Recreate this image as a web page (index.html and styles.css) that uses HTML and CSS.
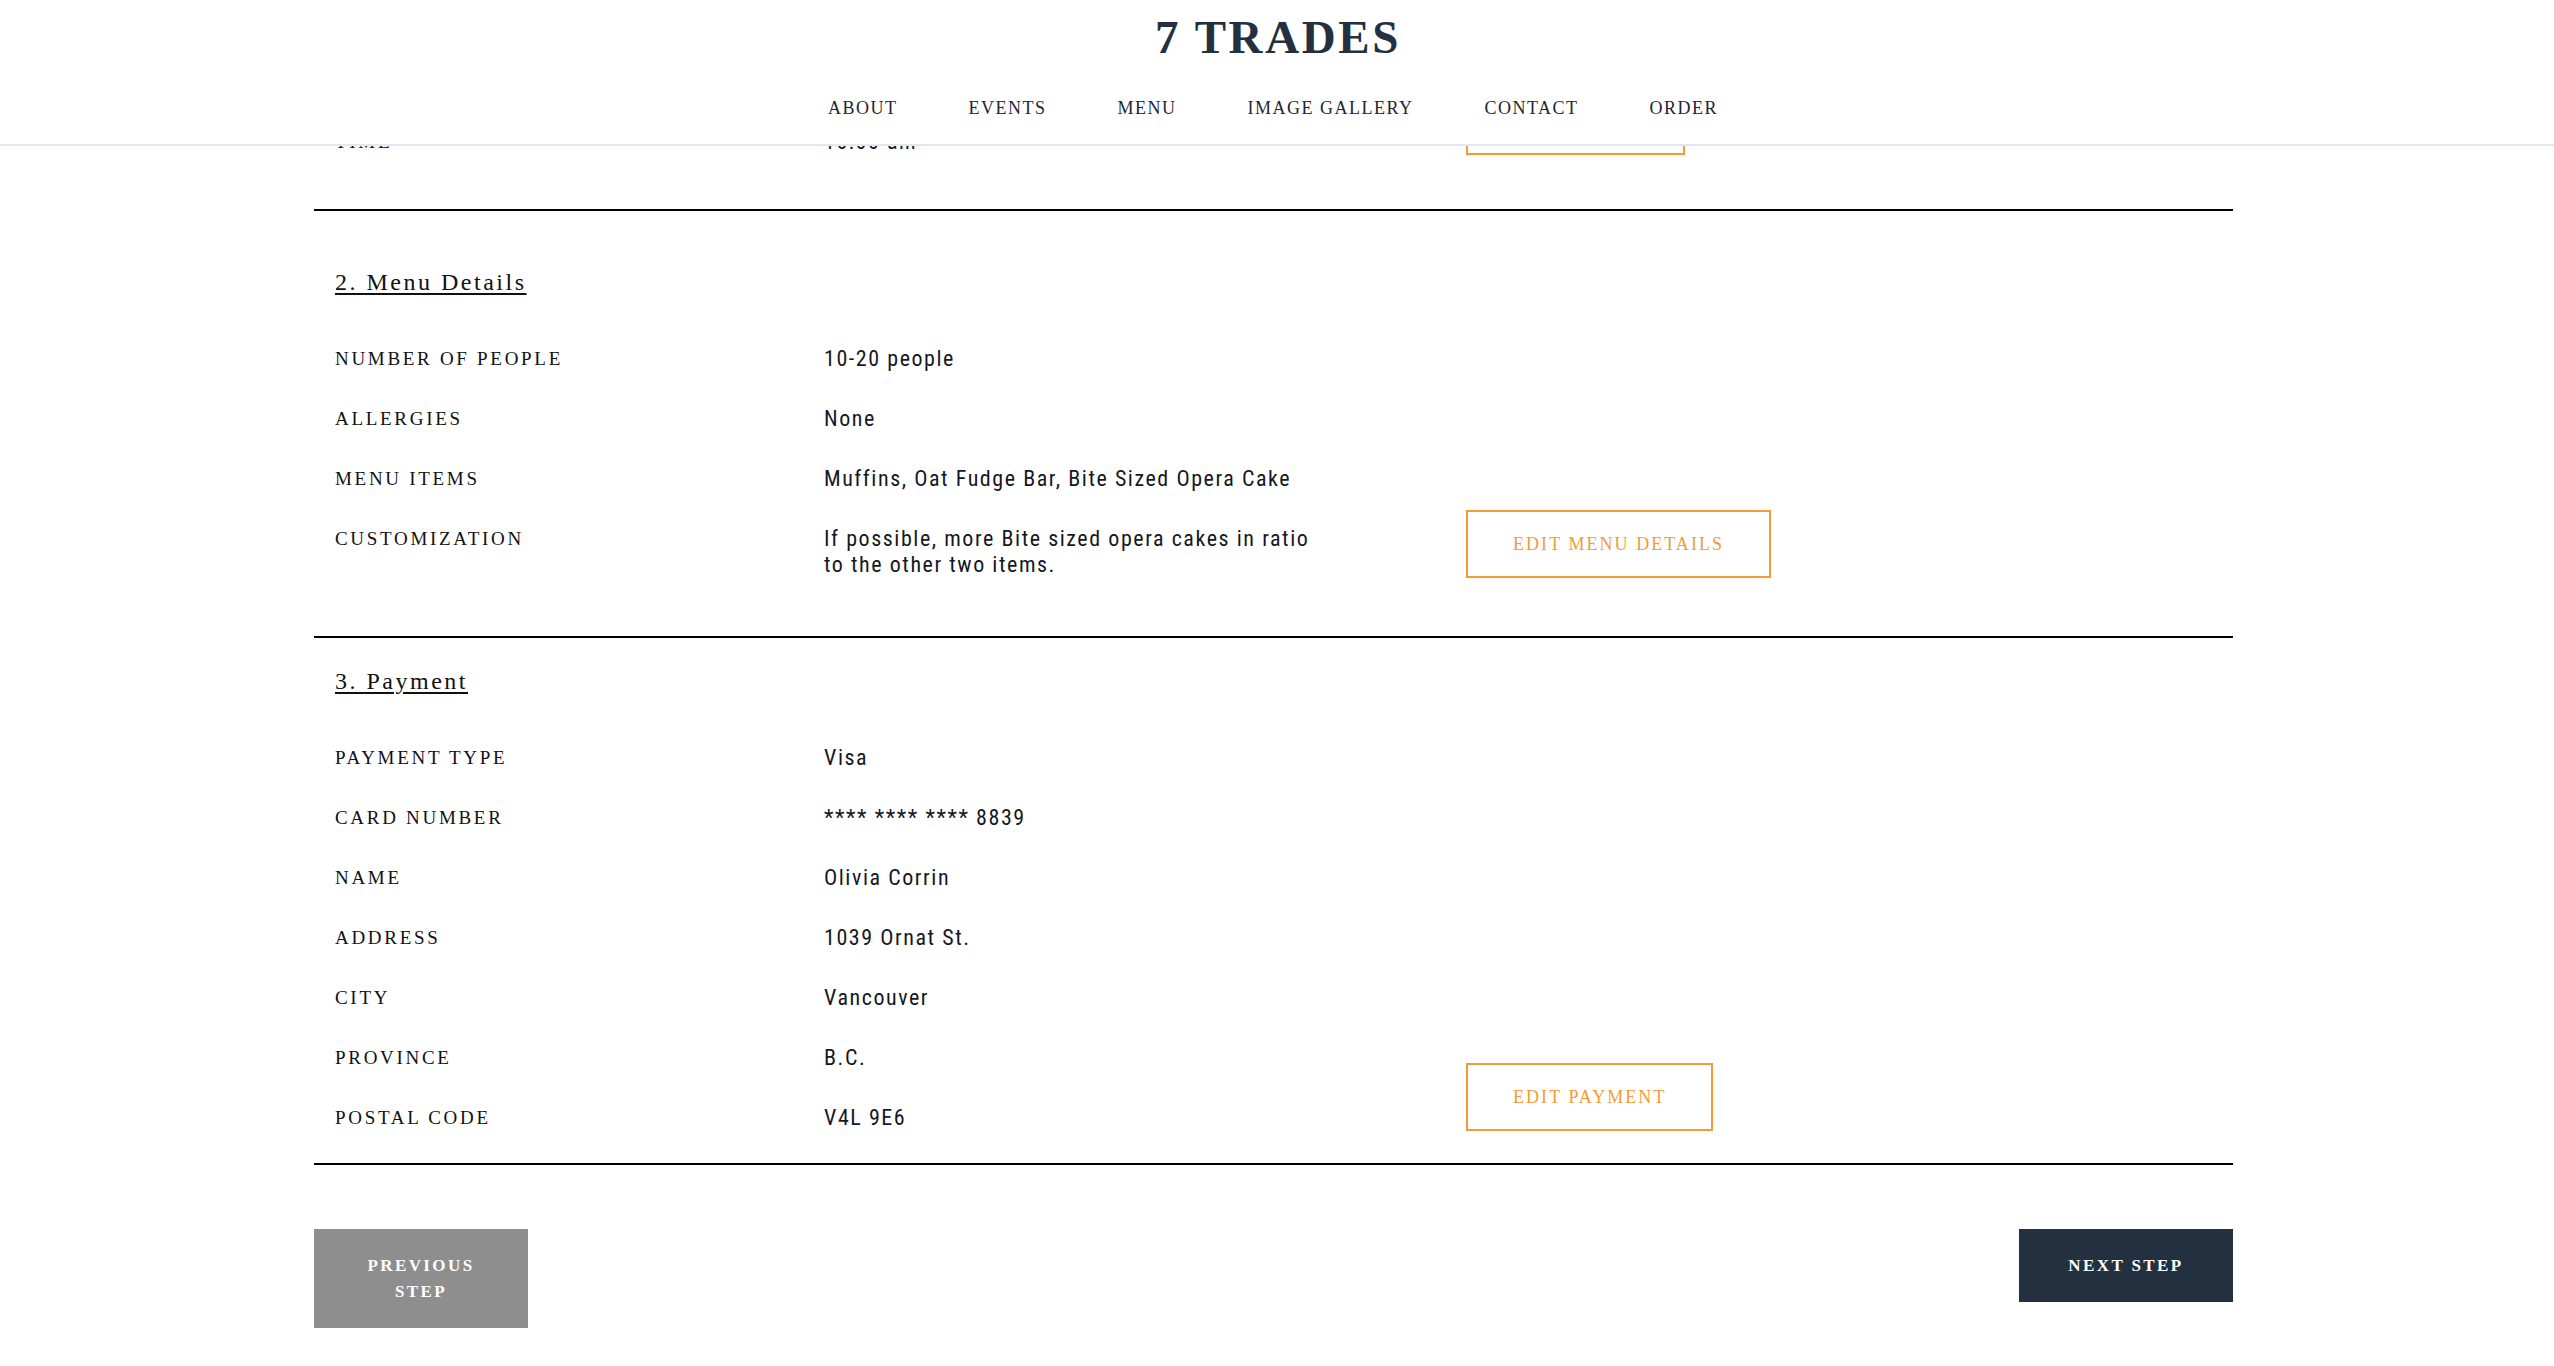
FILE: index.html
```html
<!DOCTYPE html>
<html lang="en">
<head>
<meta charset="utf-8">
<title>7 Trades — Order Review</title>
<link rel="stylesheet" href="styles.css">
</head>
<body>
<header class="site-header">
  <div class="logo">7 TRADES</div>
  <nav class="main-nav">
    <a href="#">About</a>
    <a href="#">Events</a>
    <a href="#">Menu</a>
    <a href="#">Image Gallery</a>
    <a href="#">Contact</a>
    <a href="#">Order</a>
  </nav>
</header>

<main class="order">
  <section class="review review--event">
    <div class="review__body">
      <h2 class="review__title">1. Event Details</h2>
      <dl class="review__rows">
        <dt>Event type</dt><dd>Corporate Meeting</dd>
        <dt>Date</dt><dd>June 21, 2018</dd>
        <dt>Time</dt><dd>10:00 am</dd>
      </dl>
    </div>
    <a href="#" class="edit-btn">Edit event</a>
  </section>

  <section class="review review--menu" id="menu-details">
    <div class="review__body">
      <h2 class="review__title">2. Menu Details</h2>
      <dl class="review__rows">
        <dt>Number of people</dt><dd>10-20 people</dd>
        <dt>Allergies</dt><dd>None</dd>
        <dt>Menu items</dt><dd>Muffins, Oat Fudge Bar, Bite Sized Opera Cake</dd>
        <dt>Customization</dt><dd class="wrap">If possible, more Bite sized opera cakes in ratio to the other two items.</dd>
      </dl>
    </div>
    <a href="#" class="edit-btn">Edit menu details</a>
  </section>

  <section class="review review--payment">
    <div class="review__body">
      <h2 class="review__title">3. Payment</h2>
      <dl class="review__rows">
        <dt>Payment type</dt><dd>Visa</dd>
        <dt>Card number</dt><dd>**** **** **** 8839</dd>
        <dt>Name</dt><dd>Olivia Corrin</dd>
        <dt>Address</dt><dd>1039 Ornat St.</dd>
        <dt>City</dt><dd>Vancouver</dd>
        <dt>Province</dt><dd>B.C.</dd>
        <dt>Postal code</dt><dd>V4L 9E6</dd>
      </dl>
    </div>
    <a href="#" class="edit-btn">Edit payment</a>
  </section>

  <div class="step-nav">
    <a href="#" class="step-btn step-btn--prev">Previous step</a>
    <a href="#" class="step-btn step-btn--next">Next step</a>
  </div>
</main>
<script src="script.js"></script>
</body>
</html>
```

FILE: styles.css
```css
html, body {
  margin: 0;
  padding: 0;
  background: #ffffff;
}

body {
  font-family: "Liberation Serif", "Times New Roman", serif;
  color: #111111;
}

a {
  text-decoration: none;
  color: inherit;
}

/* ---------- header ---------- */
.site-header {
  position: fixed;
  top: 0;
  left: 0;
  right: 0;
  z-index: 10;
  background: #ffffff;
  border-bottom: 2px solid #e3e7f0;
  padding: 11px 0 26px;
  display: flex;
  flex-direction: column;
  align-items: center;
}

.logo {
  font-family: "Liberation Serif", serif;
  font-weight: 700;
  font-size: 47px;
  line-height: 52px;
  letter-spacing: 2.6px;
  color: #233040;
  padding-left: 2px;
}

.main-nav {
  margin-top: 35px;
  padding-right: 8px;
  display: flex;
  gap: 71px;
}

.main-nav a {
  font-size: 18px;
  line-height: 20px;
  letter-spacing: 1.5px;
  text-transform: uppercase;
  color: #1e2632;
}

/* ---------- order review ---------- */
.order {
  width: 1919px;
  margin-left: 314px;
  padding-top: 146px;
  padding-bottom: 140px;
}

.review {
  display: flex;
  border-bottom: 2px solid #000000;
  padding-left: 21px;
}

.review--event {
  padding-top: 56px;
  padding-bottom: 54px;
}

.review--menu {
  padding-top: 56px;
  padding-bottom: 58px;
}

.review--payment {
  padding-top: 28px;
  padding-bottom: 32px;
}

.review__body {
  flex: 0 0 1131px;
}

.review__title {
  margin: 0 0 49px;
  font-size: 24px;
  line-height: 30px;
  font-weight: 400;
  letter-spacing: 2.5px;
  color: #111111;
  text-decoration: underline;
  text-decoration-thickness: 2px;
  text-underline-offset: 3px;
  display: inline-block;
}

.review__rows {
  margin: 0;
  display: grid;
  grid-template-columns: 489px 1fr;
  row-gap: 34px;
}

.review__rows dt {
  font-size: 19px;
  line-height: 26px;
  letter-spacing: 2.7px;
  text-transform: uppercase;
  color: #111111;
}

.review__rows dd {
  margin: 0;
  font-family: "Liberation Sans Narrow", "Roboto Condensed", "DejaVu Sans Condensed", "Liberation Sans", sans-serif;
  font-stretch: condensed;
  font-size: 22px;
  line-height: 26px;
  letter-spacing: 1.55px;
  color: #151823;
}

.review__rows dd.wrap {
  max-width: 505px;
}

.edit-btn {
  align-self: flex-end;
  border: 2px solid #f49b33;
  padding: 22px 45px;
  font-size: 18px;
  line-height: 20px;
  letter-spacing: 2.05px;
  text-transform: uppercase;
  color: #f49b33;
  white-space: nowrap;
}

/* ---------- step navigation ---------- */
.step-nav {
  margin-top: 64px;
  display: flex;
  justify-content: space-between;
  align-items: flex-start;
}

.step-btn {
  box-sizing: border-box;
  width: 214px;
  padding: 23.5px 30px;
  font-size: 17px;
  line-height: 26px;
  font-weight: 700;
  letter-spacing: 2.4px;
  text-transform: uppercase;
  text-align: center;
  color: #ffffff;
}

.step-btn--prev {
  background: #8e8e8e;
}

.step-btn--next {
  background: #233040;
}
```

FILE: script.js
```js
(function () {
  function align() {
    var sec = document.getElementById('menu-details');
    if (!sec) return;
    var top = sec.getBoundingClientRect().top + window.scrollY;
    window.scrollTo(0, top - 211);
  }
  if ('scrollRestoration' in history) history.scrollRestoration = 'manual';
  align();
  window.addEventListener('load', align);
})();
```
